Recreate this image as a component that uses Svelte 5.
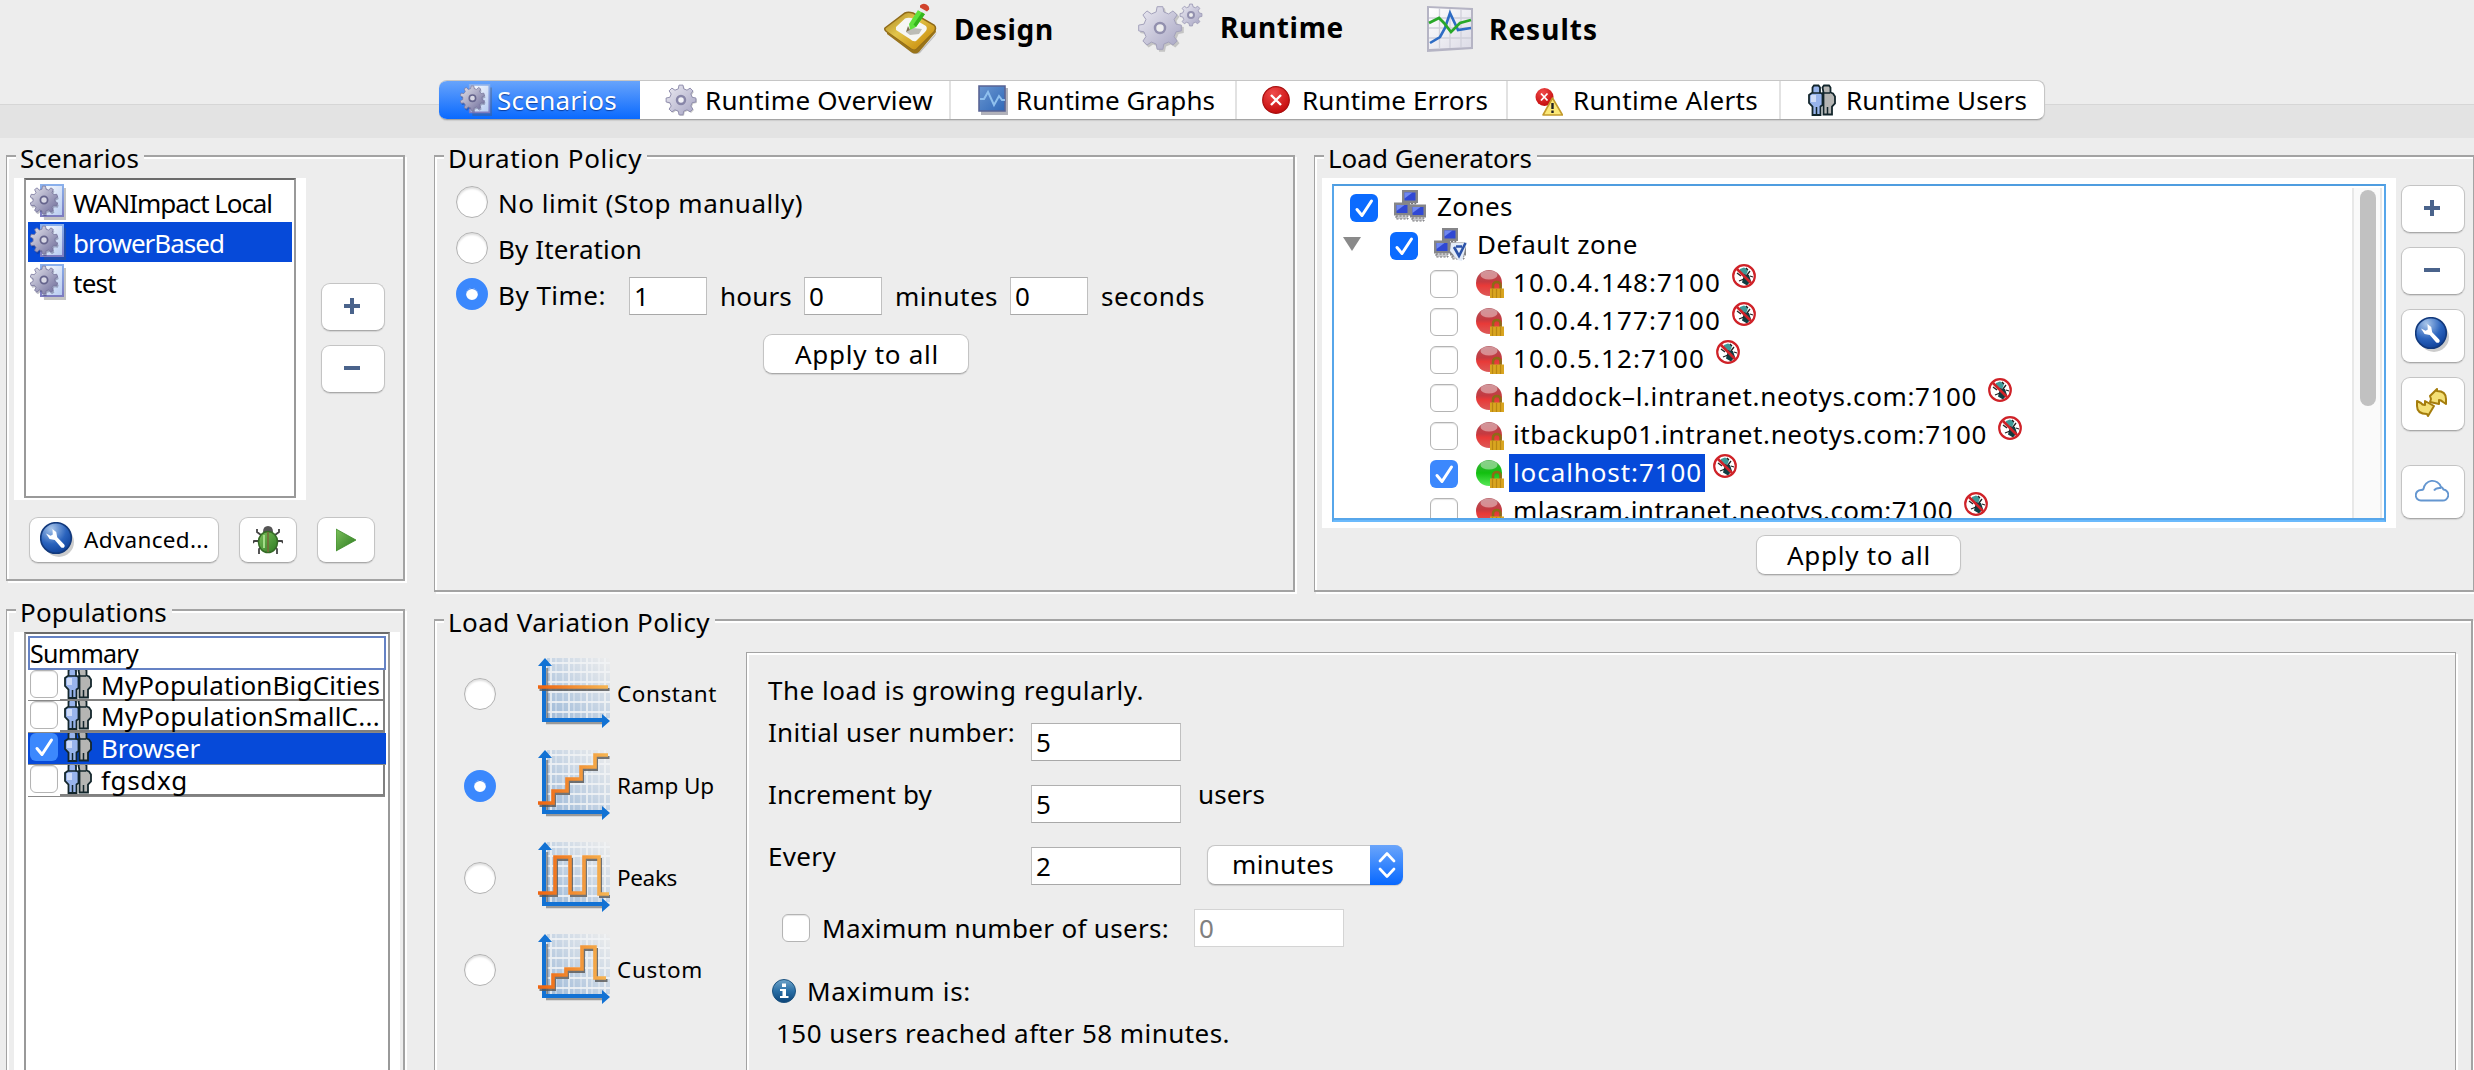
<script>
  const sections = [
    { icon: 'design', label: 'Design', w: 100, cls: 'design' },
    { icon: 'runtime', label: 'Runtime', w: 124, cls: 'runtime' },
    { icon: 'results', label: 'Results', w: 109, cls: 'results' }
  ];

  const tabs = [
    { icon: 'docgear', label: 'Scenarios', w: 120, width: 201, active: true },
    { icon: 'gear', label: 'Runtime Overview', w: 228, width: 311 },
    { icon: 'graph', label: 'Runtime Graphs', w: 199, width: 286 },
    { icon: 'error', label: 'Runtime Errors', w: 186, width: 271 },
    { icon: 'alert', label: 'Runtime Alerts', w: 185, width: 273 },
    { icon: 'users', label: 'Runtime Users', w: 181, width: 263 }
  ];

  const scenarios = [
    { name: 'WANImpact Local', w: 199 },
    { name: 'browerBased', w: 151, selected: true },
    { name: 'test', w: 43 }
  ];

  const populations = [
    { name: 'MyPopulationBigCities', w: 279 },
    { name: 'MyPopulationSmallC...', w: 279 },
    { name: 'Browser', w: 99, selected: true },
    { name: 'fgsdxg', w: 87 }
  ];

  const generators = [
    { host: '10.0.4.148:7100', w: 208 },
    { host: '10.0.4.177:7100', w: 208 },
    { host: '10.0.5.12:7100', w: 192 },
    { host: 'haddock–l.intranet.neotys.com:7100', w: 464 },
    { host: 'itbackup01.intranet.neotys.com:7100', w: 474 },
    { host: 'localhost:7100', w: 189, on: true },
    { host: 'mlasram.intranet.neotys.com:7100', w: 440 }
  ];

  const policies = [
    { name: 'Constant', w: 100, line: 'M0 29H70' },
    { name: 'Ramp Up', w: 97, line: 'M0 53H15V41H29V29H43V17H57V5H70', on: true },
    { name: 'Peaks', w: 60, line: 'M0 51H17V15H32V51H46V15H61V52H71' },
    { name: 'Custom', w: 86, line: 'M0 53H15V41H28V35H44V13H57V44H68' }
  ];

  // Spreads the letters of a label so that it fills the given width.
  function fit(node, width) {
    const natural = node.getBoundingClientRect().width;
    node.style.letterSpacing = `${(width - natural) / node.textContent.length}px`;
  }

  // Outline of a cog wheel with n teeth.
  function cog(cx, cy, outer, inner, n) {
    const pts = [];
    const step = (Math.PI * 2) / n;
    for (let i = 0; i < n; i++) {
      const a = i * step - Math.PI / 2;
      for (const [k, r] of [[-0.3, inner], [-0.17, outer], [0.17, outer], [0.3, inner]]) {
        pts.push(`${(cx + r * Math.cos(a + k * step)).toFixed(2)} ${(cy + r * Math.sin(a + k * step)).toFixed(2)}`);
      }
    }
    return `M${pts.join('L')}Z`;
  }
</script>

{#snippet text(value, w)}<span class="t" use:fit={w}>{value}</span>{/snippet}

{#snippet check(on, soft)}
  <span class="check" class:on class:soft>
    {#if on}<svg viewBox="0 0 28 28" width="28" height="28"><path d="M7 15.5L12 21.5L21.5 7" fill="none" stroke="#fff" stroke-width="3" stroke-linecap="round" stroke-linejoin="round" /></svg>{/if}
  </span>
{/snippet}

{#snippet plus()}
  <svg width="16" height="16" viewBox="0 0 16 16"><path d="M6 0h4v6h6v4h-6v6H6v-6H0V6h6z" fill="#4a638b" /></svg>
{/snippet}

{#snippet minus()}
  <svg width="16" height="16" viewBox="0 0 16 16"><path d="M0 6h16v4H0z" fill="#4a638b" /></svg>
{/snippet}

{#snippet wrench()}
  <svg width="34" height="36" viewBox="0 0 34 36">
    <ellipse cx="19" cy="20" rx="15" ry="15" fill="#000" opacity=".2" />
    <circle cx="16" cy="16" r="15.3" fill="url(#blueBall)" stroke="#12397c" stroke-width="1.6" />
    <path d="M6 11.5l4.6 2.3 2.2-1.4-.4-5.4 3.8 3 1 5.2 7 7.2c1.600 2.200-.8 4.400-3 3l-6.400-7.400-5.200-1z" fill="#fff" />
  </svg>
{/snippet}

{#snippet docgear(size)}
  <svg width={size} height={size} viewBox="0 0 36 36">
    <path d="M12 4h24v32H14z" fill="#555" opacity=".35" />
    <path d="M11 1h22v31H11z" fill="url(#paper)" stroke="url(#paperEdge)" stroke-width="2" />
    <path d={cog(15, 18, 14, 11, 10)} fill="#224" opacity=".3" />
    <path d={cog(14, 16, 14, 11, 10)} fill="url(#cogDark)" stroke="#77759c" stroke-width=".8" />
    <circle cx="14" cy="16" r="3.6" fill="#d8d8e4" stroke="#65648c" stroke-width="1.8" />
  </svg>
{/snippet}

{#snippet people(full)}
  <svg width="28" height={full ? 32 : 29} viewBox={full ? '0 0 28 32' : '0 3 28 29'}>
    <path d="M16 1.500h5l1.500 2v5l2.500 1 2 3v7l-3 3v8h-8.500V8.500l-1-5z" fill="#b5b5b3" stroke="#13262c" stroke-width="1.800" />
    <path d="M19.500 23v7M14 9h8" stroke="#13262c" stroke-width="1.500" />
    <path d="M6 1.500h4.500l1.500 2v5l2.500 1.500v11l-2 1.500v8.500h-8v-8.500l-3.500-3.500v-8l3.500-2.500v-5z" fill="#98b4ec" stroke="#13262c" stroke-width="1.800" />
    <path d="M4.500 9h8M8.500 23v7" stroke="#13262c" stroke-width="1.500" />
    <path d="M3 11h5v7H3z" fill="#cfdcf8" />
  </svg>
{/snippet}

{#snippet zones(checked)}
  <svg width="34" height="33" viewBox="0 0 34 33">
    {#each [[8, 0], [0, 12.500], [16, 14.500]] as [x, y]}
      <path d="M{x} {y}h16v13h-16z" fill="#858588" />
      <path d="M{x + 2.500} {y + 2.500}h11v8h-11z" fill="#3048d4" />
      <path d="M{x + 2.500} {y + 2.500}h8l-8 6z" fill="#7088f0" />
      <path d="M{x + 2} {y + 13.500}h12v3h-12z" fill="#c9c9cb" stroke="#77777a" stroke-width="1" stroke-dasharray="2 1.500" />
    {/each}
    {#if checked}
      <path d="M17 15h11l5-1-5 19-4-1-8-9z" fill="#e4ecf8" />
      <path d="M20 19l5 9 6.500-13M22 18.500h6" fill="none" stroke="#2b52a8" stroke-width="2.600" />
    {/if}
  </svg>
{/snippet}

{#snippet orb(green)}
  <svg width="28" height="30" viewBox="0 0 28 30">
    <circle cx="13" cy="13" r="13" fill={green ? 'url(#orbGreen)' : 'url(#orbRed)'} />
    <ellipse cx="13" cy="5" rx="8.500" ry="4.500" fill="#fff" opacity=".4" />
    <path d="M17 19v-3.500a3.800 3.500 0 0 1 7.600 0V19" fill="none" stroke="#8d6a16" stroke-width="2.600" />
    <path d="M14 18.500h14v9.500H14z" fill="#d9a520" />
    <path d="M16.500 19v9M20.500 19v9M24.500 19v9" stroke="#b98613" stroke-width="1.200" />
  </svg>
{/snippet}

{#snippet nobug()}
  <svg width="24" height="24" viewBox="0 0 24 24">
    <circle cx="12" cy="12" r="10.600" fill="#fff" />
    <path d="M8 5l4-1.500 4 2-1 4-4 2-3-3z" fill="#3d9a98" />
    <path d="M12 10l5 1 2 6-4 4.500-5-3z" fill="#0f3c40" />
    <path d="M5 9l4 3M18 7l-3 4M7 17l5-2M18 12l3 1M14 4l2 2" stroke="#222" stroke-width="1.300" />
    <circle cx="12" cy="12" r="10.800" fill="none" stroke="#cf2228" stroke-width="2.200" />
    <path d="M5 5l14 14" stroke="#cf2228" stroke-width="2.600" />
  </svg>
{/snippet}

{#snippet icon(name)}
  {#if name === 'design'}
    <svg width="54" height="52" viewBox="0 0 54 52">
      <path d="M3 30L31 49Q34 50 37 47L53 29 51 33 36 50Q32 52 28 50z" fill="#666" opacity=".35" />
      <path d="M1 25L21 10Q24 8.500 29 10L50 22Q53 25 50 29L34 45Q31 49 27 46L3 29Q0 27 1 25z" fill="url(#gold)" stroke="#8f6a18" stroke-width="1.500" />
      <path d="M3 29L27 46Q31 49 34 45L50 29Q52 27 51 25L52 29 35 49Q31 52 27 49L3 31z" fill="#9a741a" />
      <path d="M12 24L21 15.500Q25 14 30 16L42 23Q44 26 41 29L32 38Q29 39 26 36L12 27z" fill="#f6f6f4" />
      <path d="M22 29l7-4 9 1-3 5-9 1z" fill="#bcbcb6" />
      <path d="M25 21l9-14 7 4-9 13-6 3z" fill="#5fe23c" />
      <path d="M29.500 21.500l9-13 2.500 2.500-9 13z" fill="#35b51c" />
      <path d="M34 7l3-4 7 4-3 4z" fill="#e9e9e9" />
      <path d="M36 2.500q3-3 6.500-1t2.500 5l-2 2-7-4z" fill="#d1432b" />
      <path d="M24 23l2 4-4 2z" fill="#7c7050" />
    </svg>
  {:else if name === 'runtime'}
    <svg width="66" height="50" viewBox="0 0 66 50">
      <path d={cog(24, 27, 22, 17, 8)} fill="#888" opacity=".4" />
      <path d={cog(22, 25, 21.500, 16.500, 8)} fill="url(#cogLight)" stroke="#a3a1bb" stroke-width="1" />
      <circle cx="22" cy="25" r="5" fill="#eee" stroke="#9290ae" stroke-width="2.500" />
      <path d={cog(53, 12, 11, 8.500, 8)} fill="url(#cogLight)" stroke="#a3a1bb" stroke-width="1" />
      <circle cx="53" cy="12" r="3" fill="#eee" stroke="#9290ae" stroke-width="2" />
    </svg>
  {:else if name === 'results'}
    <svg width="46" height="46" viewBox="0 0 46 46">
      <path d="M0 0L46 2V43L0 46z" fill="#b5b4c4" />
      <path d="M2 2L44 4V41L2 43z" fill="url(#sheet)" />
      <path d="M12.500 2v41M23 3v39M34 3v38M2 12h42M2 22h42M2 32h42" stroke="#d0d0da" stroke-width="1.300" />
      <path d="M3 37l10-6 5-9 5-15 8 17 13-2" fill="none" stroke="#2e6cc4" stroke-width="2.600" />
      <path d="M2 17l10-5 5 5 7 9 9-9 11-3" fill="none" stroke="#28a828" stroke-width="2.800" />
    </svg>
  {:else if name === 'docgear'}
    {@render docgear(32)}
  {:else if name === 'gear'}
    <svg width="32" height="32" viewBox="0 0 32 32">
      <path d={cog(17, 17, 15, 11.500, 8)} fill="#777" opacity=".4" />
      <path d={cog(16, 16, 15, 11.500, 8)} fill="url(#cogLight)" stroke="#918fae" stroke-width="1" />
      <circle cx="16" cy="16" r="4" fill="#f2f2f6" stroke="#8886a8" stroke-width="2.500" />
    </svg>
  {:else if name === 'graph'}
    <svg class="nudge" width="30" height="30" viewBox="0 0 30 30">
      <path d="M3 3h27v27H3z" fill="#556" opacity=".45" />
      <path d="M1 1h26v25H1z" fill="url(#screen)" stroke="#5a6494" stroke-width="1.600" />
      <path d="M2 14h4l4-7 6 13 5-9 3 4h3" fill="none" stroke="#8fc0ee" stroke-width="2" />
    </svg>
  {:else if name === 'error'}
    <svg width="28" height="30" viewBox="0 0 28 30">
      <circle cx="14" cy="15" r="13.300" fill="url(#redBall)" stroke="#a80f0f" stroke-width="1.200" />
      <path d="M9 10l10 10M19 10L9 20" stroke="#fff" stroke-width="2.400" />
    </svg>
  {:else if name === 'alert'}
    <svg class="nudge low" width="28" height="28" viewBox="0 0 28 28">
      <circle cx="9.500" cy="9" r="9" fill="url(#redBall)" />
      <path d="M6 5.500l6.500 7M12.500 5.500l-6.500 7" stroke="#fff" stroke-width="1.800" />
      <path d="M17.500 10L27.500 27H8z" fill="#fbe878" stroke="#c39a2c" stroke-width="1.600" stroke-linejoin="round" />
      <path d="M17.500 15v6M17.500 22.500v2.500" stroke="#222" stroke-width="2.400" />
    </svg>
  {:else}
    <span class="nudge">{@render people(true)}</span>
  {/if}
{/snippet}

<svg class="defs" width="0" height="0">
  <defs>
    <radialGradient id="blueBall" cx=".35" cy=".2" r=".9"><stop offset="0" stop-color="#a9c6ea" /><stop offset=".55" stop-color="#2a63bd" /><stop offset="1" stop-color="#0a3a92" /></radialGradient>
    <linearGradient id="paper" x1="0" y1="0" x2="1" y2="1"><stop offset="0" stop-color="#fff" /><stop offset="1" stop-color="#b4c9f0" /></linearGradient>
    <linearGradient id="paperEdge" x1="0" y1="0" x2="0" y2="1"><stop offset="0" stop-color="#8ab0ec" /><stop offset="1" stop-color="#7d7cc0" /></linearGradient>
    <linearGradient id="cogDark" x1="0" y1="0" x2="1" y2="1"><stop offset="0" stop-color="#e8e8ee" /><stop offset="1" stop-color="#6a6898" /></linearGradient>
    <linearGradient id="cogLight" x1="0" y1="0" x2="1" y2="1"><stop offset="0" stop-color="#ecebf2" /><stop offset="1" stop-color="#a5a3c2" /></linearGradient>
    <linearGradient id="gold" x1="0" y1="0" x2="1" y2="1"><stop offset="0" stop-color="#a98422" /><stop offset=".4" stop-color="#e2c54c" /><stop offset=".75" stop-color="#d19c1c" /><stop offset="1" stop-color="#a87a16" /></linearGradient>
    <linearGradient id="sheet" x1="0" y1="0" x2="1" y2="1"><stop offset="0" stop-color="#fff" /><stop offset="1" stop-color="#dcdbe6" /></linearGradient>
    <linearGradient id="screen" x1="0" y1="0" x2="1" y2="1"><stop offset="0" stop-color="#6a96d0" /><stop offset="1" stop-color="#2f68b8" /></linearGradient>
    <radialGradient id="redBall" cx=".4" cy=".25" r=".8"><stop offset="0" stop-color="#ef4a4a" /><stop offset="1" stop-color="#c20808" /></radialGradient>
    <linearGradient id="orbRed" x1="0" y1="0" x2="0" y2="1"><stop offset="0" stop-color="#b05058" /><stop offset=".45" stop-color="#c63a40" /><stop offset=".6" stop-color="#e83a38" /><stop offset="1" stop-color="#dc5a58" /></linearGradient>
    <linearGradient id="orbGreen" x1="0" y1="0" x2="0" y2="1"><stop offset="0" stop-color="#3fae3f" /><stop offset=".5" stop-color="#12c010" /><stop offset="1" stop-color="#58e858" /></linearGradient>
    <linearGradient id="heat" gradientUnits="userSpaceOnUse" x1="0" y1="0" x2="72" y2="0"><stop offset="0" stop-color="#ee6410" /><stop offset="1" stop-color="#f6b855" /></linearGradient>
    <linearGradient id="sky" x1="0" y1="1" x2="1" y2="0"><stop offset="0" stop-color="#9db9d8" /><stop offset=".6" stop-color="#cfdae6" /><stop offset="1" stop-color="#ededed" /></linearGradient>
    <linearGradient id="leaf" x1="0" y1="0" x2="1" y2="1"><stop offset="0" stop-color="#7cc05c" /><stop offset="1" stop-color="#2c7a20" /></linearGradient>
    <linearGradient id="infoBall" x1="0" y1="0" x2="0" y2="1"><stop offset="0" stop-color="#6fa3c8" /><stop offset=".5" stop-color="#2a6fa6" /><stop offset="1" stop-color="#0c4478" /></linearGradient>
  </defs>
</svg>

<div class="app">
  <header>
    {#each sections as s}
      <div class="section {s.cls}">{@render icon(s.icon)}{@render text(s.label, s.w)}</div>
    {/each}
  </header>

  <nav>
    <div class="tabs">
      {#each tabs as tab}
        <div class="tab" class:active={tab.active} style:width="{tab.width}px">
          <span class="ico">{@render icon(tab.icon)}</span>{@render text(tab.label, tab.w)}
        </div>
      {/each}
    </div>
  </nav>

  <main>
    <div class="left">
      <section class="group scen">
        <div class="legend">{@render text('Scenarios', 119)}</div>
        <div class="scenrow">
          <div class="panel">
            <div class="list">
              {#each scenarios as s}
                <div class="item" class:selected={s.selected}>{@render docgear(36)}{@render text(s.name, s.w)}</div>
              {/each}
            </div>
          </div>
          <div class="pair">
            <button>{@render plus()}</button>
            <button>{@render minus()}</button>
          </div>
        </div>
        <div class="actions">
          <button class="adv">{@render wrench()}{@render text('Advanced...', 125)}</button>
          <button class="small">
            <svg width="30" height="30" viewBox="0 0 30 30">
              <path d="M8 10L4 7V4M22 10l4-3V4M7 16H1l-1 2M23 16h6l1 2M8 22l-2 2v5M22 22l2 2v5" fill="none" stroke="#444" stroke-width="1.800" />
              <path d="M10 7q0-6 5-6t5 6z" fill="#555" />
              <ellipse cx="15" cy="17" rx="9.500" ry="10.500" fill="url(#leaf)" stroke="#356b26" stroke-width="1.600" />
              <path d="M15 7v20" stroke="#7a6a3a" stroke-width="1.600" />
              <path d="M11 10v13" stroke="#a4dc88" stroke-width="2" />
            </svg>
          </button>
          <button class="small">
            <svg width="20" height="24" viewBox="0 0 20 24"><path d="M0 1L20 12 0 23z" fill="url(#leaf)" stroke="#3c8c28" stroke-width=".8" /></svg>
          </button>
        </div>
      </section>

      <section class="group pops">
        <div class="legend">{@render text('Populations', 147)}</div>
        <div class="panel">
          <div class="list">
            <div class="summary">{@render text('Summary', 108)}</div>
            {#each populations as p}
              <div class="pop" class:selected={p.selected}>
                {@render check(p.selected, true)}
                <div class="cell">{@render people(false)}{@render text(p.name, p.w)}</div>
              </div>
            {/each}
          </div>
        </div>
      </section>
    </div>

    <div class="right">
      <div class="top">
        <section class="group duration">
          <div class="legend">{@render text('Duration Policy', 194)}</div>
          <div class="opts">
            <div class="opt"><span class="radio"></span>{@render text('No limit (Stop manually)', 305)}</div>
            <div class="opt"><span class="radio"></span>{@render text('By Iteration', 144)}</div>
            <div class="opt">
              <span class="radio on"></span>{@render text('By Time:', 108)}
              <div class="time">
                <span class="field">1</span>{@render text('hours', 72)}
                <span class="field">0</span>{@render text('minutes', 103)}
                <span class="field">0</span>{@render text('seconds', 104)}
              </div>
            </div>
          </div>
          <button class="apply">{@render text('Apply to all', 144)}</button>
        </section>

        <section class="group gens">
          <div class="legend">{@render text('Load Generators', 204)}</div>
          <div class="genrow">
            <div class="gencol">
              <div class="treepanel">
                <div class="tree">
                  <div class="rows">
                    <div class="node root">{@render check(true, false)}<span class="zi">{@render zones(false)}</span><span class="name">{@render text('Zones', 76)}</span></div>
                    <div class="node zone">
                      <svg class="tri" width="18" height="14" viewBox="0 0 18 14"><path d="M0 0h18L9 14z" fill="#8a8a8a" /></svg>
                      {@render check(true, false)}<span class="zi">{@render zones(true)}</span><span class="name">{@render text('Default zone', 161)}</span>
                    </div>
                    {#each generators as g}
                      <div class="node host">
                        {@render check(g.on, true)}<span class="orb">{@render orb(g.on)}</span>
                        <span class="name" class:selected={g.on}>{@render text(g.host, g.w)}</span>
                        <span class="nb">{@render nobug()}</span>
                      </div>
                    {/each}
                  </div>
                  <div class="track"><div class="thumb"></div></div>
                </div>
              </div>
              <button class="apply">{@render text('Apply to all', 144)}</button>
            </div>
            <div class="side">
              <button>{@render plus()}</button>
              <button>{@render minus()}</button>
              <button class="tall">{@render wrench()}</button>
              <button class="tall">
                <svg width="32" height="30" viewBox="0 0 32 30">
                  <g fill="#f3df76" stroke="#a57d0c" stroke-width="2" stroke-linejoin="round">
                    <path d="M14 8l7-7v2q9 0 9 8v5l-3-2q-2-2-4-2v4l-9-2 1-3z" />
                    <path d="M1 13l4 2q1 2 4 2v-4l9 5-6 10-1-2q-10 0-10-8z" />
                  </g>
                </svg>
              </button>
              <button class="tall cloud">
                <svg width="34" height="24" viewBox="0 0 34 24">
                  <path d="M6 21.500h21a5.500 5.500 0 0 0 1.500-11q-1-2-2.500-2.500a9 9 0 0 0-17.500 2Q8 11 6 11a5.200 5.200 0 0 0 0 10.500zM19 11.500q2-3 7-2.500" fill="none" stroke="#6496d0" stroke-width="1.900" />
                </svg>
              </button>
            </div>
          </div>
        </section>
      </div>

      <section class="group load">
        <div class="legend">{@render text('Load Variation Policy', 262)}</div>
        <div class="loadrow">
          <div class="policies">
            {#each policies as p}
              <div class="policy">
                <span class="radio" class:on={p.on}></span>
                <svg width="72" height="72" viewBox="0 0 72 72">
                  <path d="M9 0h63v60H9z" fill="url(#sky)" />
                  <path d="M18 0v60M25 0v60M36 0v60M43 0v60M54 0v60M61 0v60" stroke="#fff" stroke-width="2" opacity=".3" />
                  <path d="M13 0v60M31 0v60M49 0v60M67 0v60M9 5h63M9 14h63M9 24h63M9 34h63M9 44h63M9 54h63" stroke="#f2f4f6" stroke-width="1.800" opacity=".85" />
                  <path d="M9 10v52M8 65h56" stroke="#555" stroke-width="2.500" opacity=".55" />
                  <path d="M4 64V8H0L7 0l7 8H8v52h56v-4l8 7-8 7v-6z" fill="#1272d4" />
                  <path d={p.line} transform="translate(1.500 2.500)" fill="none" stroke="#555" stroke-width="3" opacity=".8" />
                  <path d={p.line} fill="none" stroke="url(#heat)" stroke-width="3.600" />
                </svg>
                {@render text(p.name, p.w)}
              </div>
            {/each}
          </div>
          <div class="detail">
            <div class="line intro">{@render text('The load is growing regularly.', 376)}</div>
            <div class="param"><span class="key">{@render text('Initial user number:', 247)}</span><span class="field wide">5</span></div>
            <div class="param"><span class="key">{@render text('Increment by', 164)}</span><span class="field wide">5</span><span class="unit">{@render text('users', 67)}</span></div>
            <div class="param">
              <span class="key">{@render text('Every', 68)}</span><span class="field wide">2</span>
              <span class="select">
                {@render text('minutes', 102)}
                <span class="arrows"><svg width="18" height="26" viewBox="0 0 18 26"><path d="M2 9l7-7.500L16 9M2 17l7 7.500L16 17" fill="none" stroke="#fff" stroke-width="2.600" stroke-linecap="round" stroke-linejoin="round" /></svg></span>
              </span>
            </div>
            <div class="max">{@render check(false, false)}{@render text('Maximum number of users:', 347)}<span class="field wide off">0</span></div>
            <div class="info">
              <svg width="24" height="24" viewBox="0 0 24 24"><circle cx="12" cy="12" r="11.500" fill="url(#infoBall)" stroke="#1c527f" stroke-width="1" /><path d="M10 4.500h4v3.500h-4zM8 10h6v7h2.500v2H8v-2h2.500v-5H8z" fill="#fff" /></svg>
              {@render text('Maximum is:', 164)}
            </div>
            <div class="line reach">{@render text('150 users reached after 58 minutes.', 454)}</div>
          </div>
        </div>
      </section>
    </div>
  </main>
</div>

<style>
  :global(body) { margin: 0; background: #ededed; overflow: hidden; }
  .defs { position: absolute; }
  .app {
    width: 2474px; height: 1070px; overflow: hidden; background: #ededed; color: #000;
    font: 26px/32px "Noto Sans", "Open Sans", "Liberation Sans", sans-serif;
    display: flex; flex-direction: column;
  }
  .app * { box-sizing: border-box; }
  .app svg { display: block; flex: none; }
  .t { display: inline-block; white-space: pre; flex: none; }

  header { height: 80px; flex: none; display: flex; padding-left: 884px; font-size: 28px; font-weight: 700; }
  .section { display: flex; align-items: flex-start; }
  .design { width: 254px; padding-top: 3px; gap: 16px; }
  .runtime { width: 289px; padding-top: 3px; gap: 16px; }
  .results { padding-top: 6px; gap: 16px; }
  .design .t { margin-top: 10px; }
  .runtime .t { margin-top: 8px; }
  .results .t { margin-top: 7px; }

  nav {
    height: 58px; flex: none; padding-left: 439px;
    background: linear-gradient(#ededed 24px, #d6d6d6 24px, #d6d6d6 25px, #e3e3e3 25px);
  }
  .tabs {
    display: flex; width: 1606px; height: 40px; background: #fff; border-radius: 8px; overflow: hidden;
    border: 1px solid #c6c6c6; border-left: 0; border-bottom-color: #a5a5a5; box-shadow: 0 1px 1px #ccc;
  }
  .tab { display: flex; align-items: center; flex: none; padding-left: 25px; border-right: 2px solid #e2e2e2; }
  .tab:last-child { border-right: 0; }
  .tab .ico { width: 40px; height: 32px; display: flex; align-items: center; }
  .nudge { margin-left: 2px; }
  .low { margin-top: 4px; }
  .tab.active {
    height: 40px; margin-top: -1px; padding-left: 21px; border: 0; color: #fff;
    background: linear-gradient(#6aa5fb, #0768ff); text-shadow: 0 1px 1px #0a3c9c;
  }
  .tab.active .ico { width: 37px; }

  main { display: flex; padding: 17px 0 0 6px; gap: 29px; }
  .left { width: 399px; flex: none; }
  .right { flex: none; width: 2040px; }
  .group {
    border: 2px solid #a3a3a3; border-left-width: 1px;
    box-shadow: 2px 2px 0 #fff, inset 2px 2px 0 #fff;
  }
  .legend { height: 32px; width: max-content; margin: -15px 0 0 9px; padding: 0 5px 0 4px; background: #ededed; }
  .panel { background: #fff; padding: 0 10px; }
  .list { background: #fff; border: 2px solid #999; border-top-color: #6b6b6b; padding: 2px; }
  .scen { height: 426px; }
  .scenrow { display: flex; margin: 4px 0 0 7px; gap: 15px; }
  .scenrow .panel { width: 292px; height: 322px; }
  .scenrow .list { height: 320px; }
  .item { display: flex; align-items: center; height: 40px; padding-left: 2px; gap: 7px; }
  .item .t { margin-top: 1px; }
  .selected { background: #064ad9; color: #fff; }
  .pair { display: flex; flex-direction: column; gap: 14px; padding-top: 105px; }

  button {
    font: inherit; color: #000; padding: 0; margin: 0; width: 64px; height: 48px; background: #fff;
    display: flex; align-items: center; justify-content: center;
    border: 1px solid #c4c4c4; border-bottom-color: #a9a9a9; border-radius: 9px; box-shadow: 0 1px 1px #d2d2d2;
  }
  .pair button, .side button { padding: 0 2px 2px 0; }
  .actions { display: flex; gap: 20px; margin: 17px 0 0 22px; }
  .actions button { height: 46px; }
  .actions .adv { width: 190px; justify-content: flex-start; padding-left: 10px; gap: 10px; font-size: 22.500px; }
  .actions .small { width: 58px; }

  .pops { margin-top: 28px; height: 520px; }
  .pops .panel { width: 386px; height: 470px; margin: 4px 0 0 7px; }
  .pops .list { height: 470px; }
  .summary { height: 34px; border: 2px solid #6582c4; line-height: 30px; font-size: 25px; }
  .pop { display: flex; height: 32px; border-bottom: 1px solid #888; margin-right: 1px; }
  .pop:nth-child(2) { height: 31px; }
  .pop .check { margin-left: 2px; }
  .cell {
    flex: 1; display: flex; margin-left: 2px; padding-left: 4px; gap: 9px; height: 31px;
    border-right: 2px solid #808080; border-bottom: 2px solid #808080; line-height: 30px;
  }
  .pop.selected { margin-right: 0; }
  .pop.selected .cell { border-color: transparent; border-bottom-width: 0; }

  .check { display: block; flex: none; width: 28px; height: 28px; background: #fff; border: 1px solid #b4b4b4; border-radius: 6px; box-shadow: inset 0 1px 1px #e4e4e4; }
  .check.on { background: #0b6bff; border: 0; box-shadow: none; }
  .check.on.soft { background: #3c88fd; }
  .radio { display: block; flex: none; width: 32px; height: 32px; border-radius: 50%; background: #fff; border: 1px solid #b2b2b2; box-shadow: inset 0 2px 2px #e0e0e0; }
  .radio.on { border: 10.500px solid #3b88fd; box-shadow: 0 1px 0 #3278e8 inset; }
  .field {
    display: block; flex: none; width: 78px; height: 38px; line-height: 37px; padding-left: 4px; background: #fff;
    border: 1px solid #c0c0c0; border-top-color: #b0b0b0; border-bottom-color: #a8a8a8; letter-spacing: .5px;
  }
  .wide { width: 150px; }
  .off { color: #808080; border-color: #d4d4d4; }

  .top { display: flex; gap: 19px; }
  .duration { width: 861px; height: 437px; flex: none; }
  .opts { margin: 12px 0 0 21px; }
  .opt { display: flex; align-items: center; gap: 10px; height: 32px; margin-bottom: 14px; }
  .opt > .t { margin-top: 1px; }
  .time { display: flex; align-items: center; margin: 4px 0 0 13px; height: 38px; }
  .time .t { margin: 0 12px 0 13px; }
  .duration .apply { width: 206px; height: 40px; margin: 24px 0 0 328px; padding-left: 2px; }

  .gens { width: 1161px; height: 437px; flex: none; }
  .genrow { display: flex; margin: 4px 0 0 7px; gap: 5px; }
  .gencol { width: 1074px; flex: none; }
  .treepanel { background: #fff; height: 350px; padding: 6px 10px; }
  .tree {
    height: 338px; display: flex; overflow: hidden; background: #fff;
    border: 2px solid #57a6ea; border-top-color: #4f9de0; box-shadow: inset 0 -2px 0 #57a6ea; border-bottom-color: #6bbafc;
    padding-bottom: 2px;
  }
  .rows { flex: 1; padding-top: 2px; height: 332px; overflow: hidden; }
  .node { display: flex; height: 38px; }
  .node .check { margin-top: 6px; }
  .root { padding-left: 16px; }
  .zone { padding-left: 9px; }
  .tri { margin: 11px 29px 0 0; }
  .host { padding-left: 96px; }
  .zi { margin: 2px 5px 0 16px; }
  .orb { margin: 6px 5px 0 18px; }
  .name { height: 38px; line-height: 36px; padding: 0 3px 0 4px; }
  .nb { margin-left: 8px; }
  .track { width: 30px; margin: 2px 2px 0 0; border-left: 2px solid #e8e8e8; border-right: 2px solid #e8e8e8; background: #fafafa; padding: 2px 0 0 6px; }
  .thumb { width: 16px; height: 216px; border-radius: 8px; background: #c1c1c1; }
  .gencol .apply { width: 205px; height: 40px; margin: 7px 0 0 434px; padding-left: 1px; }
  .side { display: flex; flex-direction: column; gap: 14px; padding-top: 7px; }
  .side .tall { height: 54px; }
  .side .cloud { margin-top: 20px; }

  .load { width: 2039px; height: 520px; margin-top: 27px; }
  .loadrow { display: flex; }
  .policies { width: 311px; flex: none; padding-top: 20px; }
  .policy { display: flex; align-items: flex-start; height: 92px; padding-left: 29px; font-size: 22.500px; }
  .policy .radio { margin-top: 20px; }
  .policy svg { margin: 0 7px 0 42px; }
  .policy .t { margin-top: 20px; }
  .detail {
    width: 1710px; height: 500px; margin-top: 14px; padding: 21px 0 0 21px;
    border: 1px solid #a3a3a3; box-shadow: 2px 2px 0 #fff, inset 2px 2px 0 #fff;
  }
  .line { height: 32px; }
  .intro { margin-bottom: 17px; }
  .param { display: flex; height: 38px; margin-bottom: 24px; }
  .key { width: 263px; flex: none; margin-top: -7px; }
  .unit { margin: -7px 0 0 17px; }
  .select {
    display: flex; justify-content: space-between; width: 196px; height: 40px; margin: -2px 0 0 26px; padding-left: 24px; line-height: 37px;
    background: #fff; border: 1px solid #c6c6c6; border-right: 0; border-bottom-color: #a9a9a9; border-radius: 8px; box-shadow: 0 1px 1px #ccc;
  }
  .arrows { width: 33px; height: 40px; margin-top: -1px; display: flex; align-items: center; justify-content: center; border-radius: 0 8px 8px 0; background: linear-gradient(#6aa5fb, #0768ff); }
  .max { display: flex; align-items: center; height: 38px; margin: 3px 0 0 14px; }
  .max .t { margin: 0 25px 0 12px; }
  .info { display: flex; align-items: center; height: 32px; margin: 28px 0 0 4px; gap: 11px; }
  .reach { margin: 10px 0 0 8px; }
</style>
